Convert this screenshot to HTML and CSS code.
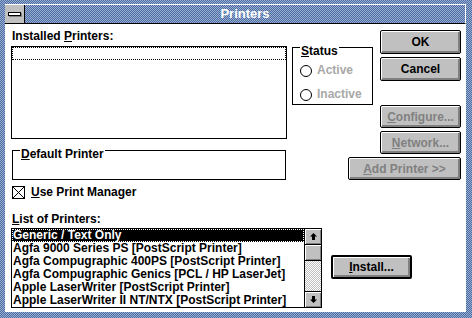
FILE: index.html
```html
<!DOCTYPE html>
<html lang="en">
<head>
    <meta charset="UTF-8">
    <meta name="viewport" content="width=device-width, initial-scale=1.0">
    <title>Printers</title>
    <link rel="stylesheet" href="styles.css">
</head>
<body>

    <div class="window">
        <!-- Title Bar -->
        <div class="title-bar">
            <div class="sys-menu"><div class="sys-bar"></div></div>
            <div class="title">Printers</div>
        </div>

        <div class="client">
            <div class="top">
                <!-- Installed printers -->
                <div class="left-col">
                    <div class="label">Installed <u>P</u>rinters:</div>
                    <div class="listbox installed">
                        <div class="row focus"></div>
                    </div>
                    <div class="group default-group">
                        <span class="group-label"><u>D</u>efault Printer</span>
                    </div>
                    <div class="check-row">
                        <svg width="13" height="13" viewBox="0 0 13 13">
                            <rect x="0.5" y="0.5" width="12" height="12" fill="#fff" stroke="#000"/>
                            <path d="M1 1L12 12M12 1L1 12" stroke="#000" stroke-width="1"/>
                        </svg>
                        <span><u>U</u>se Print Manager</span>
                    </div>
                </div>

                <!-- Status -->
                <div class="group status-group">
                    <span class="group-label"><u>S</u>tatus</span>
                    <div class="radio-row"><span class="radio"></span>Active</div>
                    <div class="radio-row"><span class="radio"></span>Inactive</div>
                </div>

                <!-- Buttons -->
                <div class="buttons">
                    <button class="btn tall">OK</button>
                    <button class="btn tall">Cancel</button>
                    <button class="btn disabled configure"><u>C</u>onfigure...</button>
                    <button class="btn disabled"><u>N</u>etwork...</button>
                    <button class="btn disabled wide"><u>A</u>dd Printer &gt;&gt;</button>
                </div>
            </div>

            <!-- List of printers -->
            <div class="label list-label"><u>L</u>ist of Printers:</div>
            <div class="bottom-row">
                <div class="listbox printers">
                    <div class="items">
                        <div class="row selected">Generic / Text Only</div>
                        <div class="row">Agfa 9000 Series PS [PostScript Printer]</div>
                        <div class="row">Agfa Compugraphic 400PS [PostScript Printer]</div>
                        <div class="row">Agfa Compugraphic Genics [PCL / HP LaserJet]</div>
                        <div class="row">Apple LaserWriter [PostScript Printer]</div>
                        <div class="row">Apple LaserWriter II NT/NTX [PostScript Printer]</div>
                    </div>
                    <div class="scrollbar">
                        <div class="sb-btn sb-up">
                            <svg width="7" height="7" viewBox="0 0 7 7"><polygon points="3.5,0 7,3.5 5,3.5 5,7 2,7 2,3.5 0,3.5" fill="#000"/></svg>
                        </div>
                        <div class="sb-btn sb-thumb"></div>
                        <div class="sb-track"></div>
                        <div class="sb-btn sb-down">
                            <svg width="7" height="7" viewBox="0 0 7 7"><polygon points="3.5,7 7,3.5 5,3.5 5,0 2,0 2,3.5 0,3.5" fill="#000"/></svg>
                        </div>
                    </div>
                </div>
                <button class="btn install"><u>I</u>nstall...</button>
            </div>
        </div>
    </div>

</body>
</html>
```

FILE: styles.css
```css
body {
    margin: 0;
    width: 472px;
    height: 318px;
    overflow: hidden;
    font-family: "Liberation Sans", Arial, sans-serif;
    font-size: 12px;
    font-weight: bold;
    color: #000;
}
.window {
    width: 472px;
    height: 318px;
    box-sizing: border-box;
    padding: 4px 6px 6px 5px;
    display: flex;
    flex-direction: column;
    background: repeating-conic-gradient(#4a6aa0 0 25%, #9ab0d4 0 50%) 0 0 / 2px 2px;
}
.title-bar {
    height: 18px;
    display: flex;
    border-top: 1px solid #fff;
    border-right: 1px solid #fff;
    border-bottom: 1px solid #000;
}
.sys-menu {
    width: 19px;
    height: 18px;
    background-color: #c0c0c0;
    border-right: 1px solid #000;
}
.sys-bar {
    width: 11px;
    height: 2px;
    margin: 7px 0 0 3px;
    background-color: #fff;
    border: 1px solid #000;
    box-shadow: 1px 1px 0 #808080;
}
.title {
    flex: 1;
    text-align: center;
    color: #fff;
    font-size: 13px;
    line-height: 18px;
}
.client {
    flex: 1;
    background-color: #fff;
    padding: 6px 0 0 6px;
    box-sizing: border-box;
}
.top {
    display: flex;
    align-items: flex-start;
}
.left-col {
    width: 276px;
    display: flex;
    flex-direction: column;
}
.label {
    height: 13px;
    line-height: 13px;
    margin-left: 1px;
}
.listbox {
    box-sizing: border-box;
    border: 1px solid #000;
    background-color: #fff;
}
.installed {
    height: 93px;
    margin-top: 3px;
}
.row {
    height: 13px;
    line-height: 13px;
    padding-left: 1px;
    white-space: nowrap;
    overflow: hidden;
    box-sizing: border-box;
}
.row.focus {
    border: 1px dotted #000;
}
.row.selected {
    background-color: #000;
    color: #fff;
    outline: 1px dotted #fff;
    outline-offset: -1px;
}
.group {
    position: relative;
    box-sizing: border-box;
    border: 1px solid #000;
}
.group-label {
    position: absolute;
    top: -3px;
    left: 7px;
    padding: 0 1px;
    line-height: 13px;
    background-color: #fff;
    white-space: nowrap;
}
.default-group {
    width: 274px;
    height: 30px;
    margin: 11px 0 0 1px;
}
.check-row {
    display: flex;
    align-items: center;
    gap: 6px;
    height: 13px;
    line-height: 13px;
    margin: 6px 0 0 1px;
}
.check-row svg { display: block; }
.status-group {
    width: 81px;
    height: 58px;
    margin: 17px 0 0 5px;
    padding: 16px 0 0 7px;
    display: flex;
    flex-direction: column;
    gap: 11px;
}
.radio-row {
    display: flex;
    align-items: center;
    height: 13px;
    line-height: 13px;
    color: #a8a8a8;
}
.radio {
    width: 12px;
    height: 12px;
    box-sizing: border-box;
    border: 1px solid #000;
    border-radius: 50%;
    margin-right: 5px;
}
.buttons {
    width: 81px;
    margin-left: 7px;
    display: flex;
    flex-direction: column;
    align-items: flex-end;
    gap: 3px;
}
.btn {
    flex-shrink: 0;
    box-sizing: border-box;
    width: 81px;
    height: 23px;
    padding: 0;
    border: 1px solid #000;
    border-radius: 2px;
    background-color: #c0c0c0;
    box-shadow: inset 1px 1px 0 #fff, inset -2px -2px 0 #808080;
    font-family: inherit;
    font-size: 12px;
    font-weight: bold;
    color: #000;
    white-space: nowrap;
}
.btn.tall { height: 24px; }
.btn.disabled { color: #808080; }
.btn.configure { margin-top: 21px; }
.btn.wide { width: 113px; }
.list-label { margin-top: 14px; }
.bottom-row {
    display: flex;
    align-items: flex-start;
    margin-top: 2px;
}
.printers {
    width: 311px;
    height: 80px;
    display: flex;
}
.items {
    flex: 1;
    overflow: hidden;
}
.scrollbar {
    width: 17px;
    box-sizing: border-box;
    border-left: 1px solid #000;
    display: flex;
    flex-direction: column;
}
.sb-btn {
    height: 16px;
    box-sizing: border-box;
    background-color: #c0c0c0;
    box-shadow: inset 1px 1px 0 #fff, inset -1px -1px 0 #808080;
    display: flex;
    align-items: center;
    justify-content: center;
}
.sb-up, .sb-thumb { border-bottom: 1px solid #000; }
.sb-down { border-top: 1px solid #000; }
.sb-btn svg { display: block; }
.sb-track {
    flex: 1;
    background: repeating-conic-gradient(#c0c0c0 0 25%, #fff 0 50%) 0 0 / 2px 2px;
}
.install {
    height: 24px;
    border-width: 2px;
    margin: 27px 0 0 9px;
}
```
